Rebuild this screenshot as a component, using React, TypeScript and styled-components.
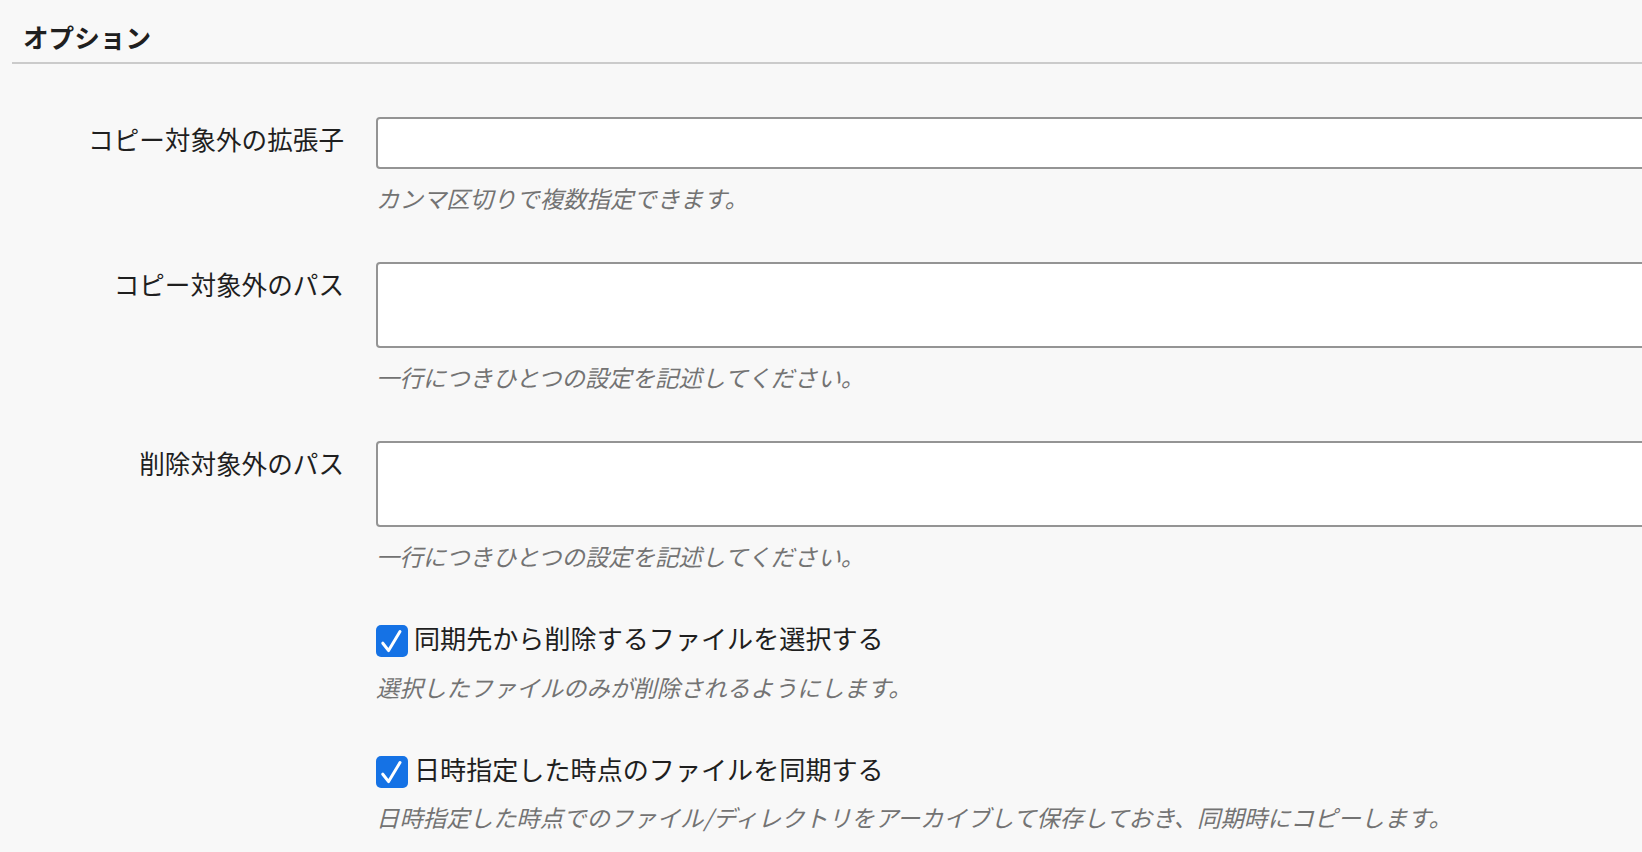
import React from "react";
import styled, { createGlobalStyle } from "styled-components";

const GlobalStyle = createGlobalStyle`
  html, body {
    margin: 0;
    padding: 0;
    background: #f8f8f8;
    overflow: hidden;
  }
  body {
    font-family: "Noto Sans CJK JP", "Noto Sans", sans-serif;
    color: #1f1f1f;
  }
`;

const Page = styled.div`
  width: 1642px;
  height: 852px;
  box-sizing: border-box;
  padding-left: 12px;
  overflow: hidden;
`;

const SectionTitle = styled.h2`
  margin: 0;
  padding: 18px 0 6px 11px;
  font-size: 25.6px;
  line-height: 38.4px;
  font-weight: 700;
  color: #1f1f1f;
  border-bottom: 2px solid #cbcbcb;
`;

const Form = styled.div`
  display: flex;
  flex-direction: column;
  gap: 46px;
  margin-top: 52.6px;
`;

const Row = styled.div<{ $extra?: number }>`
  display: grid;
  grid-template-columns: 332px 1fr;
  column-gap: 32px;
  margin-top: ${(p) => p.$extra ?? 0}px;
`;

const Label = styled.label`
  padding-top: 3px;
  text-align: right;
  font-size: 25.6px;
  line-height: 38.4px;
  white-space: nowrap;
  color: #1f1f1f;
`;

const Field = styled.div`
  display: flex;
  flex-direction: column;
  min-width: 0;
`;

const TextInput = styled.input`
  display: block;
  width: 1300px;
  height: 52px;
  box-sizing: border-box;
  border: 2px solid #949494;
  border-radius: 4px;
  background: #ffffff;
  outline: none;
  padding: 0 10px;
  font: inherit;
`;

const TextArea = styled.textarea`
  display: block;
  width: 1300px;
  height: 86px;
  box-sizing: border-box;
  border: 2px solid #949494;
  border-radius: 4px;
  background: #ffffff;
  outline: none;
  resize: none;
  padding: 6px 10px;
  font: inherit;
`;

const Hint = styled.p`
  margin: 12px 0 0;
  font-size: 23.4px;
  line-height: 35.1px;
  font-style: italic;
  color: #737373;
  white-space: nowrap;
`;

const CheckRow = styled.label`
  display: flex;
  align-items: flex-start;
  gap: 6px;
  font-size: 26.1px;
  line-height: 38.4px;
  color: #1f1f1f;
  white-space: nowrap;
`;

const CheckBox = styled.span`
  display: grid;
  place-items: center;
  width: 32px;
  height: 32px;
  margin-top: 6px;
  border-radius: 5px;
  background: #1572e5;
  flex: none;
`;

const CheckMark = () => (
  <svg width="32" height="32" viewBox="0 0 32 32" aria-hidden="true">
    <path
      d="M6.8 18.2 L12.6 25.6 L24 6.6"
      fill="none"
      stroke="#ffffff"
      strokeWidth="3"
      strokeLinecap="round"
      strokeLinejoin="round"
    />
  </svg>
);

const Checkbox = ({ label }: { label: string }) => (
  <CheckRow>
    <CheckBox>
      <CheckMark />
    </CheckBox>
    {label}
  </CheckRow>
);

export default function App() {
  return (
    <Page>
      <GlobalStyle />
      <SectionTitle>オプション</SectionTitle>
      <Form>
        <Row>
          <Label>コピー対象外の拡張子</Label>
          <Field>
            <TextInput type="text" />
            <Hint>カンマ区切りで複数指定できます。</Hint>
          </Field>
        </Row>
        <Row>
          <Label>コピー対象外のパス</Label>
          <Field>
            <TextArea />
            <Hint>一行につきひとつの設定を記述してください。</Hint>
          </Field>
        </Row>
        <Row>
          <Label>削除対象外のパス</Label>
          <Field>
            <TextArea />
            <Hint>一行につきひとつの設定を記述してください。</Hint>
          </Field>
        </Row>
        <Row $extra={-1}>
          <span />
          <Field>
            <Checkbox label="同期先から削除するファイルを選択する" />
            <Hint>選択したファイルのみが削除されるようにします。</Hint>
          </Field>
        </Row>
        <Row $extra={-1}>
          <span />
          <Field>
            <Checkbox label="日時指定した時点のファイルを同期する" />
            <Hint>
              日時指定した時点でのファイル/ディレクトリをアーカイブして保存しておき、同期時にコピーします。
            </Hint>
          </Field>
        </Row>
      </Form>
    </Page>
  );
}
